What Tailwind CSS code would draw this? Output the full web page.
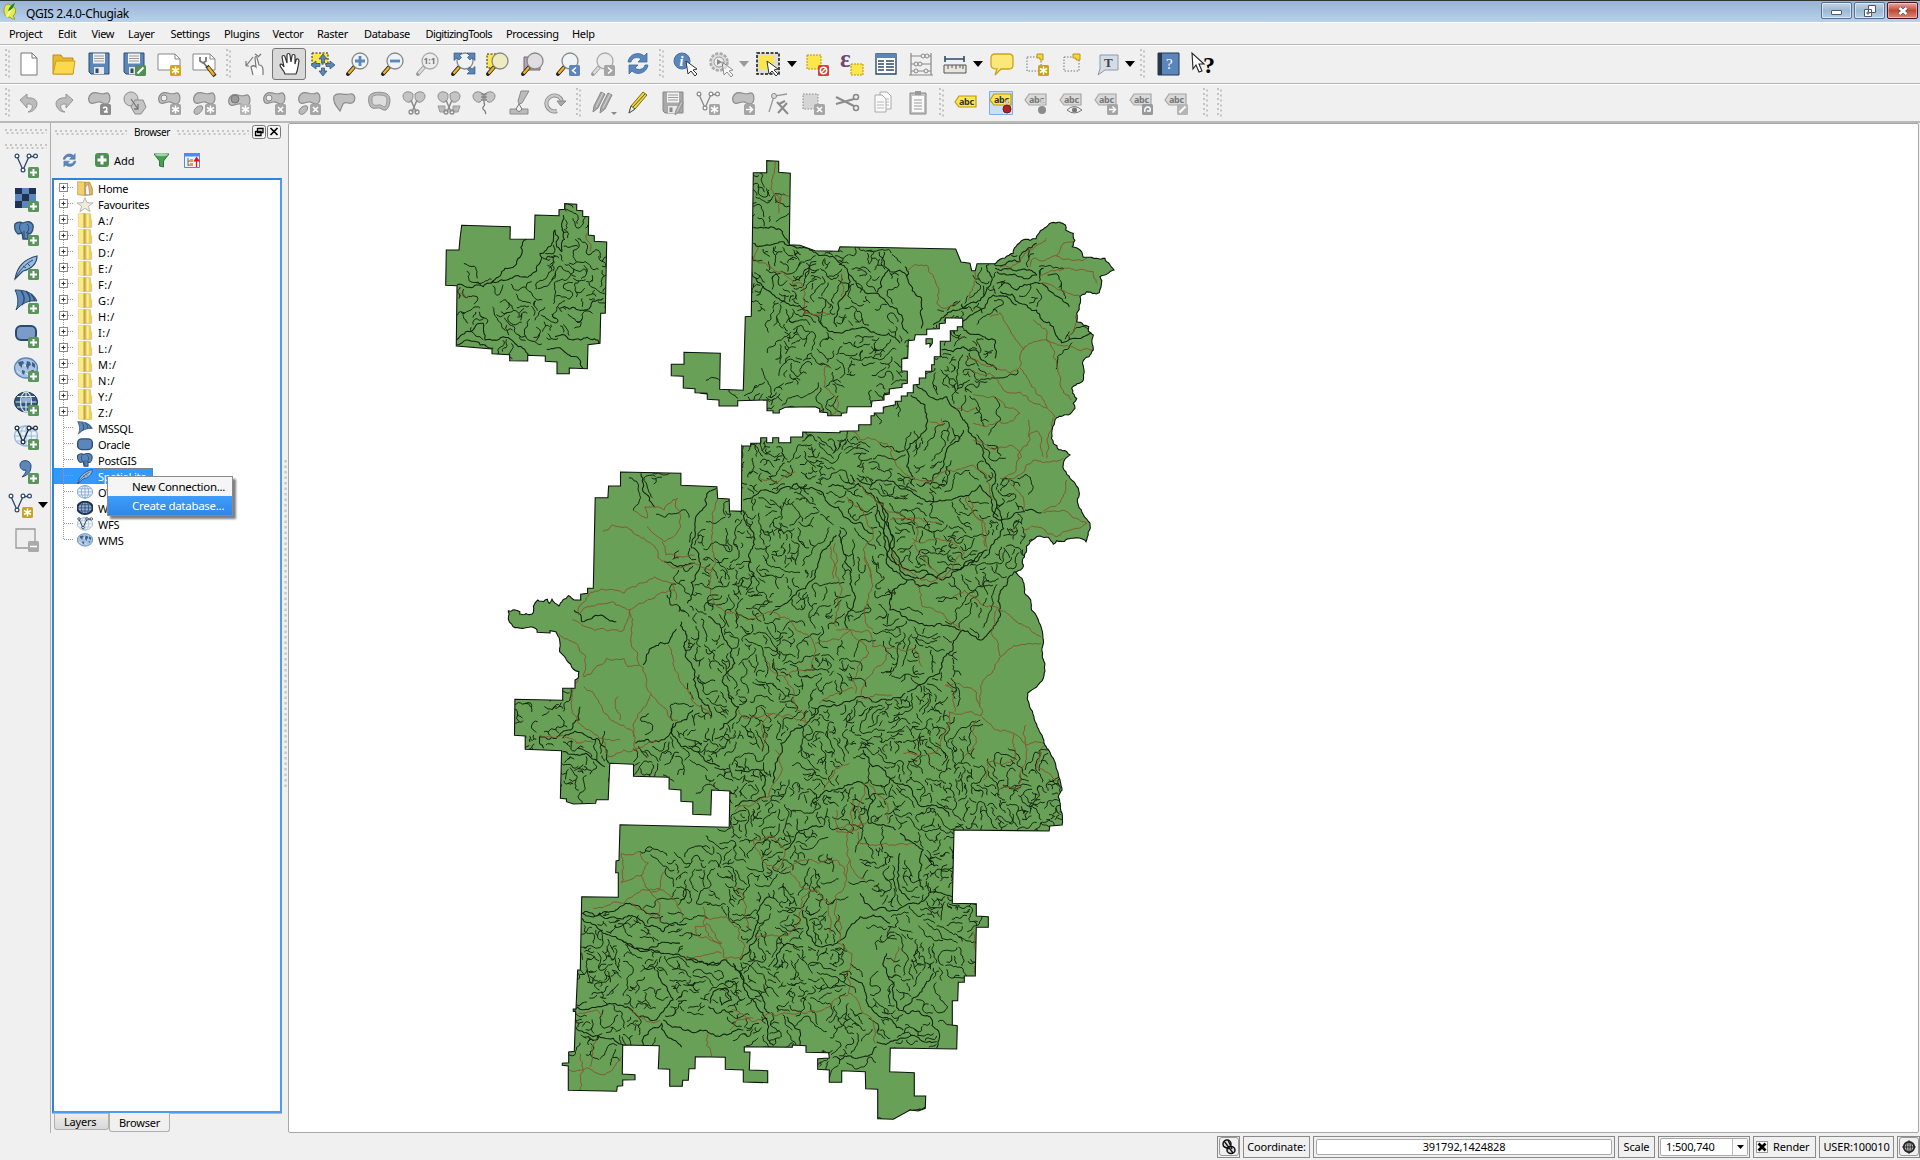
<!DOCTYPE html>
<html lang="en">
<head>
<meta charset="utf-8">
<title>QGIS 2.4.0-Chugiak</title>
<script src="https://cdn.jsdelivr.net/npm/@tailwindcss/browser@4"></script>
</head>
<body class="w-[1920px] h-[1160px] overflow-hidden bg-[#f0f0f0] text-black text-[11px] leading-none font-['Noto_Sans','Open_Sans',sans-serif] flex flex-col">

<header class="h-[22px] shrink-0 border-t border-[#333] bg-gradient-to-b from-[#98b4d4] to-[#b9d1ea] flex items-start">
  <svg class="w-4 h-[18px] ml-[2px] mt-[1px] shrink-0" viewBox="0 0 16 18"><path d="M7 2C3 2 1.500 6 2 10s3 6 6 5l2 2h3l-2-3c3-2 3-6 2-8z" fill="#e5e94c" stroke="#8ea32d"/><path d="M5 15L12 2" stroke="#f4f7b0" stroke-width="2"/><path d="M6 9c1-4 4-7 7-8-1 4-3 7-7 8z" fill="#28802c"/></svg>
  <span class="ml-2 mt-[5px] text-[12px] tracking-[-0.33px] leading-[15px]">QGIS 2.4.0-Chugiak</span>
  <div class="ml-auto mr-[2px] mt-[1px] flex gap-[2px]">
    <div class="w-[31px] h-[17px] rounded-[2px] border border-[#5b6f8e] ring-1 ring-inset ring-white/50 bg-gradient-to-b from-[#c2d5e8] via-[#9db8d3] to-[#b7cfe6] grid place-items-center"><div class="w-[11px] h-[5px] mt-1 bg-white border border-[#4d5870] rounded-[1px]"></div></div>
    <div class="w-[31px] h-[17px] rounded-[2px] border border-[#5b6f8e] ring-1 ring-inset ring-white/50 bg-gradient-to-b from-[#c2d5e8] via-[#9db8d3] to-[#b7cfe6] grid place-items-center"><svg class="w-3 h-3" viewBox="0 0 12 12"><path d="M4.500.5h7v7h-7zM.5 4.500h7v7h-7z" fill="#fff" stroke="#4d5870"/><path d="M3 7h2v2H3z" fill="#9db8d3" stroke="#4d5870" stroke-width=".8"/></svg></div>
    <div class="w-[31px] h-[17px] rounded-[2px] border border-[#4d1426] ring-1 ring-inset ring-white/40 bg-gradient-to-b from-[#e5a99d] via-[#c04a33] to-[#dc8a74] grid place-items-center"><svg class="w-3 h-[10px]" viewBox="0 0 12 10"><path d="M2.500 2l7 6M9.500 2l-7 6" stroke="#4b4f62" stroke-width="4.200"/><path d="M2.500 2l7 6M9.500 2l-7 6" stroke="#fff" stroke-width="2.600"/></svg></div>
  </div>
</header>

<nav id="menu" class="h-[23px] shrink-0 border-b border-[#b9b9b9] border-t border-t-white pl-[9px] flex items-center"></nav>
<div id="bar1" class="h-[39px] shrink-0 border-t border-t-white border-b border-b-[#b5b5b5] flex items-center pl-[5px] pb-[2px] [&_svg]:shrink-0"></div>
<div id="bar2" class="h-[39px] shrink-0 border-t border-t-white border-b-2 border-b-[#b9b9b9] flex items-center pl-[5px] [&_svg]:shrink-0"></div>

<main class="h-[1010px] shrink-0 flex">
  <aside class="w-[51px] shrink-0 border-r border-[#b0b0b0]">
    <div class="h-[25px] pt-[6px] px-[5px]">
      <svg class="w-[42px] h-[20px]"><path d="M0 1h42M1.500 4h42M0 16h42M1.500 19h42" stroke="#c4c4c4" stroke-width="2" stroke-dasharray="2 3"/></svg>
    </div>
    <div id="side" class="flex flex-col"></div>
  </aside>

  <section class="w-[231px] ml-[1px] shrink-0 flex flex-col">
    <div class="h-[18px] shrink-0 flex items-center pl-[3px]">
      <svg class="w-[72px] h-[5px]"><path d="M0 1h72M1.500 4h72" stroke="#c4c4c4" stroke-width="2" stroke-dasharray="2 3"/></svg>
      <span class="w-[50px] text-center text-[10px] tracking-[-0.4px]">Browser</span>
      <svg class="w-[72px] h-[5px]"><path d="M0 1h72M1.500 4h72" stroke="#c4c4c4" stroke-width="2" stroke-dasharray="2 3"/></svg>
      <svg class="w-[29px] h-[14px] ml-[3px]" viewBox="0 0 29 14"><rect x=".5" y=".5" width="13" height="13" rx="2" fill="#f4f4f4" stroke="#777"/><path d="M5.500 3v4.500H11V3.500H5.500M3.500 6v4.500H9V6.500H3.500" fill="none" stroke="#000" stroke-width="1.300"/><rect x="15.500" y=".5" width="13" height="13" rx="2" fill="#f4f4f4" stroke="#777"/><path d="M18.500 3l7 7M25.500 3l-7 7" stroke="#000" stroke-width="1.700"/></svg>
    </div>
    <div id="tools" class="h-[37px] shrink-0 flex items-center pl-[10px] pt-px"></div>
    <div class="relative h-[935px] shrink-0 mr-[1px] border-2 border-[#4a9df2] border-l-[#2f83dc] border-t-[#2f83dc] bg-white">
      <div id="tree" class="flex flex-col"></div>
      <div class="absolute left-[53px] top-[296px] w-[126px] h-[40px] bg-[#f5f5f5] border border-[#8a8a8a] shadow-[3px_3px_2px_rgba(0,0,0,0.5)] flex flex-col text-[11.500px] tracking-[-0.28px]">
        <div class="h-[19px] pl-[24px] pt-px flex items-center">New Connection...</div>
        <div class="h-[19px] pl-[24px] flex items-center text-white bg-gradient-to-b from-[#3f9dfc] to-[#2d87e6]">Create database...</div>
      </div>
    </div>
    <div class="h-5 shrink-0 flex items-start border-t border-[#b5b5b5] mr-px tracking-[-0.2px]">
      <div class="w-[55px] h-[16px] ml-[2px] rounded-b-[3px] border border-t-0 border-[#b0b0b0] bg-gradient-to-b from-[#ededed] to-[#d8d8d8] pl-[9px] pt-[2px]">Layers</div>
      <div class="w-[61px] h-[19px] -mt-px rounded-b-[3px] border border-t-0 border-[#b0b0b0] bg-[#f0f0f0] text-center pt-[4px]">Browser</div>
    </div>
  </section>

  <div class="w-[5px] shrink-0 flex items-start justify-center pt-[337px]"><svg class="w-[3px] h-[330px]"><path d="M1.500 0v330" stroke="#c8c8c8" stroke-width="2.500" stroke-dasharray="2.500 3"/></svg></div>
  <div class="flex-1 mr-px bg-white border border-[#a8a8a8] rounded-[2px]">
    <svg id="map" class="block w-[1629px] h-[1007px]" viewBox="289 124 1629 1007"></svg>
  </div>
</main>

<footer class="flex-1 flex items-center justify-end gap-[3px] tracking-[-0.15px]">
  <div class="w-[23px] h-[22px] border border-[#8a8a8a] grid place-items-center"><div class="w-5 h-[19px] rounded-[3px] border border-[#999] grid place-items-center"><svg class="size-4" viewBox="0 0 16 16"><ellipse cx="6" cy="5" rx="4" ry="4" fill="#ddd" stroke="#111" stroke-width="1.500"/><ellipse cx="10" cy="11" rx="4" ry="3.500" fill="#ddd" stroke="#111" stroke-width="1.500"/><path d="M3 2l9 12M7 1l4 9M2 7l6 3" stroke="#111" stroke-width="1.300"/></svg></div></div>
  <div class="w-[67px] h-[22px] border border-[#8a8a8a] grid place-items-center">Coordinate:</div>
  <div class="w-[302px] h-[22px] border border-[#8a8a8a] p-[2px]"><div class="size-full bg-white border border-[#aaa] rounded-[2px] grid place-items-center"><span>391792,1424828</span></div></div>
  <div class="w-[37px] h-[22px] border border-[#8a8a8a] grid place-items-center">Scale</div>
  <div class="w-[92px] h-[22px] border border-[#8a8a8a] p-px"><div class="size-full bg-white border border-[#aaa] rounded-[2px] flex items-center pl-[5px]"><span>1:500,740</span><span class="ml-auto h-full w-[15px] border-l border-[#bbb] grid place-items-center bg-[#fafafa]"><svg class="w-[7px] h-1" viewBox="0 0 7 4"><path d="M0 0h7L3.500 4z"/></svg></span></div></div>
  <div class="w-[63px] h-[22px] border border-[#8a8a8a] flex items-center pl-[2px] gap-[5px]"><svg class="w-3 h-3" viewBox="0 0 12 12"><rect x=".5" y=".5" width="11" height="11" fill="#fff" stroke="#999"/><path d="M2.500 2.500l7 7M9.500 2.500l-7 7" stroke="#000" stroke-width="2.800"/></svg>Render</div>
  <div class="w-[75px] h-[22px] border border-[#8a8a8a] grid place-items-center">USER:100010</div>
  <div class="w-[23px] h-[22px] border border-[#8a8a8a] grid place-items-center"><div class="w-5 h-[19px] rounded-[3px] border border-[#999] grid place-items-center"><svg class="size-[14px]" viewBox="0 0 16 16" fill="none" stroke="#222"><circle cx="8" cy="8" r="6" fill="#bbb" stroke-width="2"/><ellipse cx="8" cy="8" rx="2.800" ry="6"/><path d="M0 8h16M8 0v16"/></svg></div></div>
</footer>

<script>
// ---- icon artwork, all on a 24 x 24 grid ----
const B = '#5b86bb', N = '#2c4a6b', Y = '#fbe64b';
const lens = (c = '#f2b01e', f = '#eef3f3', s = '#888') => `<path d="M2 22L9 14" stroke="${c === '#ddd' ? '#999' : '#222'}" stroke-width="4" stroke-linecap="round"/><path d="M2.500 21.500L8 15.200" stroke="${c}" stroke-width="2.400"/><circle cx="14" cy="9" r="8" fill="${f}" stroke="${s}" stroke-width="1.300"/>`;
const sq = (c, inner, x = 13, y = 13) => `<rect x="${x}" y="${y}" width="11" height="11" rx="1.500" fill="${c}"/><g transform="translate(${x},${y})" stroke="#fff" fill="none" stroke-width="1.500">${inner}</g>`;
const star = '<path d="M5.500 1.500v8M2 3.500l7 4M9 3.500l-7 4"/>', cross = '<path d="M3 3l5 5M8 3l-5 5"/>', plus = '<path d="M5.500 2v7M2 5.500h7" stroke-width="2"/>', pen = '<path d="M2.500 8.500l6-6" stroke-width="2.200"/>', arr = '<path d="M2 5.500h6M5.500 2.500l3 3-3 3"/>';
const green = sq('#5a965c', plus, 14, 14);
const cursor = (x, y) => `<path transform="translate(${x},${y})" d="M0 0l2 13 3-3 4 5 2-2-4-4 4-1z" fill="#fff" stroke="#333"/>`;
const blob = (x = 0, y = 0, s = 1) => `<path transform="translate(${x},${y}) scale(${s})" d="M4 3C9-1 14 5 19 2c5-1 5 9 1 11-4 1-5-3-9-2S3 14 2 10c-1-3 0-5 2-7z" fill="#bfbfbf" stroke="#8b8b8b" stroke-width="1.200"/>`;
const globe = (f, s) => `<ellipse cx="12" cy="11" rx="11.500" ry="10" fill="${f}" stroke="${s}" stroke-width="1.300"/><path d="M1 11h22M3 6h18M3 16h18M12 1v20" stroke="${s}" fill="none"/><ellipse cx="12" cy="11" rx="5.500" ry="10" fill="none" stroke="${s}"/>`;
const vee = '<path d="M3 3.500L9 17 15 3.500h6" fill="none" stroke="#2c4a6b" stroke-width="1.300"/><g fill="#fff" stroke="#2c4a6b" stroke-width="1.200"><circle cx="3" cy="3" r="1.900"/><circle cx="9" cy="17" r="1.900"/><circle cx="15" cy="3" r="1.900"/><circle cx="21.500" cy="3" r="1.900"/></g>';
const eleph = `<path d="M1 3c3-3 6-2 8-1 4-2 8-2 10 2 1 3-1 8-3 9l-2-1 0 6h-5l-1-6-4 1C1 11 0 6 1 3z" fill="${B}" stroke="${N}" stroke-width="1.300"/><path d="M7 2c-2 3-2 7 1 10M13 3c3 3 2 7-1 9M10 10v7" stroke="${N}" fill="none"/>`;
const feather = `<path d="M1 24C3 12 10 4 23 1c0 7-5 13-14 15z" fill="#9bbbe0" stroke="${N}" stroke-width="1.200"/><path d="M1 24C5 16 11 9 19 5M9 11l3 2M13 8l3 3" stroke="${N}" fill="none"/>`;
const sail = `<path d="M1 1c9 0 18 2 22 11-8-1-15 2-21 9 3-7 2-14-1-20z" fill="${B}" stroke="${N}"/><path d="M7 2c4 5 4 10 1 14M12 2c4 4 5 9 3 11M17 5c3 3 4 5 3 7" stroke="${N}" fill="none" stroke-width="1.400"/>`;
const world = '<ellipse cx="12" cy="11" rx="11.500" ry="10" fill="#a9c4e2" stroke="#5b86bb" stroke-width="1.300"/><path d="M4 5l5-1 1 2-2 2v3l-3-3zM13 4l3 1 1 3-2 1-1 4-2-4zM18 5l3 2 0 4-3-2zM8 13l3 1-1 4-2-2zM17 13l3 0-1 3z" fill="#3f5f86"/><path d="M3 14l4 3M12 16l3 3M10 8l2 1" stroke="#e6eff8"/>';
const tag = (f, s, t) => `<path d="M1 9l4-6h17v11H5z" fill="${f}" stroke="${s}" stroke-width="1.200"/><text x="5" y="12" font-size="9" font-weight="bold" font-family="Noto Sans" letter-spacing="-.3" fill="${t}">abc</text>`;
const gt = tag('#d9d9d9', '#a5a5a5', '#777');
const doc = (x, y) => `<path d="M${x} ${y}h7l4 4v13h-11z" fill="#fafafa" stroke="#aaa"/><path d="M${x + 2} ${y + 7}h7m-7 3h7m-7 3h7" stroke="#bbb"/>`;
const sciss = '<path d="M9 9l5 12M15 9l-5 12" stroke="#8b8b8b" stroke-width="1.500"/><circle cx="9" cy="21" r="2" fill="none" stroke="#8b8b8b" stroke-width="1.300"/><circle cx="15" cy="21" r="2" fill="none" stroke="#8b8b8b" stroke-width="1.300"/>';
const lungs = '<path d="M11 3C7-1 1 1 1 5s4 7 7 6c3-2 3-4 3-8zM13 3c4-4 10-2 10 2s-4 7-7 6c-3-2-3-4-3-8z" fill="#c4c4c4" stroke="#8b8b8b"/>';
const floppy = (c, d) => `<path d="M2 1h20v21H4l-2-2z" fill="${c}" stroke="${d}"/><path d="M6 1.500h12v10H6z" fill="#f3f3f3"/><path d="M7 4h10M7 6.500h10M7 9h10" stroke="#999"/><path d="M7 15h10v7H7z" fill="#e8e8e8"/><path d="M8.500 16.500h3V21h-3z" fill="${d}"/>`;
const hand = '<path d="M8 22c-1-4-5-6-5-9 1-2 3 0 4 2L5 5c0-2 3-2 3 0l2 6V3c0-2 3-2 3 0l1 7 1-6c0-2 3-2 3 0v8l1-4c1-2 3-1 3 1-1 5-1 9-3 13z" fill="#fff" stroke="#333" stroke-width="1.200"/>';
const sync = c => `<path d="M2 10C3 2 13-1 18 4l3-3v9h-9l3-3C11 4 6 6 5 10zM22 13c-1 8-11 11-16 6l-3 3v-9h9l-3 3c4 3 9 1 10-3z" fill="${c}" stroke="#3e6ba0" stroke-width=".8"/>`;
const gpen = (x, y) => `<path transform="translate(${x},${y})" d="M0 20l1-6L8 0l4 2-7 14z" fill="#a8a8a8" stroke="#888"/><path transform="translate(${x},${y})" d="M3 15L10 1" stroke="#d5d5d5"/>`;
const I = {
 new: '<path d="M4 1h11l5 5v17H4z" fill="#fff" stroke="#777"/><path d="M15 1v5h5" fill="none" stroke="#777"/>',
 open: '<path d="M1 3h8l2 3h10v16H1z" fill="#e9b92d" stroke="#c08e12"/><path d="M4 9h19l-2 13H1z" fill="#fbd94f" stroke="#cf9e1c"/>',
 save: floppy(B, N), saveas: floppy(B, N) + sq('#4f8f53', pen),
 comp: '<path d="M1 2h17l5 5v11H1z" fill="#fff" stroke="#888"/><path d="M18 2v5h5" fill="none" stroke="#888"/>' + sq('#d6a50f', star),
 manager: '<path d="M1 2h17l5 5v11H1z" fill="#fff" stroke="#888"/><path d="M18 2v5h5" fill="none" stroke="#888"/><path d="M8 5v4l3 2 3-2V5M11 10l4 5" stroke="#777" stroke-width="1.800" fill="none"/><path d="M15 14l8 10" stroke="#333" stroke-width="4"/><path d="M16 15l6 8" stroke="#f2b01e" stroke-width="2.500"/>',
 touch: '<path d="M11 23L9 15c2-2 4-1 5 0l-1-9c0-2 2-2 2 0l2 7c3 0 4 2 4 5v5" fill="#f8f8f8" stroke="#777" stroke-width="1.200"/><path d="M13 2l3 2M11 5L4 14M4 14h3M4 14V9M16 5l3-3" fill="none" stroke="#777" stroke-width="1.200"/>',
 pan: hand,
 pansel: `<path d="M1 1h16v11H1z" fill="${Y}" stroke="#222" stroke-dasharray="2 1.500"/><path d="M12 2l4 5h-2.500v4h-3V7H8zM12 24l4-5h-2.500v-3h-3v3H8zM0 13l5-4v2.500h4v3H5V17zM24 13l-5-4v2.500h-4v3h4V17z" fill="${B}" stroke="${N}" stroke-width=".7"/>`,
 zin: lens() + `<path d="M14 4v10M9 9h10" stroke="${B}" stroke-width="2.800"/>`,
 zout: lens() + `<path d="M9 9h10" stroke="${B}" stroke-width="2.800"/>`,
 z11: lens('#ddd', '#ececec', '#aaa') + '<text x="7.500" y="12" font-size="8.500" font-weight="bold" fill="#777" font-family="Noto Sans">1:1</text>',
 zfull: lens() + `<g fill="${B}" stroke="${N}" stroke-width=".6"><path d="M3 1h8L8.500 3.500l2 2-2.500 2.500-2-2L3 8.500z"/><path d="M24 1h-8l2.500 2.500-2 2L19 8l2-2 3 2.500z"/><path d="M24 22h-8l2.500-2.500-2-2L19 15l2 2 3-2.500z"/></g>`,
 zsel: `<path d="M1 2h14v14H1z" fill="${Y}" stroke="#222" stroke-dasharray="2 1.500"/>` + lens('#f2b01e', '#ecebc2'),
 zlay: '<path d="M3 5h16v13H3z" fill="#b2a5b7" stroke="#75677c"/>' + lens('#f2b01e', '#dfdde2'),
 zlast: lens() + sq(B, '<path d="M7 2.500l-3.500 3 3.500 3"/>'), znext: lens('#ddd', '#ececec', '#aaa') + sq('#a5a5a5', '<path d="M4 2.500l3.500 3-3.500 3"/>'),
 sync: sync(B),
 info: `<circle cx="9" cy="9" r="8" fill="${B}" stroke="#45709f"/><text x="6.500" y="14" font-size="14" font-style="italic" font-weight="bold" font-family="Liberation Serif" fill="#fff">i</text>` + cursor(13, 9),
 act: '<circle cx="11" cy="10" r="8.500" fill="#ddd" stroke="#aaa" stroke-width="2.500" stroke-dasharray="3 1.500"/><circle cx="11" cy="10" r="5" fill="#eee" stroke="#999"/><path d="M9 7l5 3-5 3z" fill="#888"/><g opacity=".5">' + cursor(14, 10) + '</g>',
 sel: `<path d="M1 1h22v21H1z" fill="#ddd" stroke="#111" stroke-width="1.500" stroke-dasharray="3 1.500"/><path d="M3 3h15v14H3z" fill="${Y}"/>` + cursor(11, 9),
 desel: `<path d="M2 3h14v14H2z" fill="${Y}" stroke="#b79410" stroke-dasharray="2 1"/>` + sq('#d93b36', '<circle cx="5.500" cy="5.500" r="3.200"/><path d="M3 8l5-5"/>'),
 expr: `<text x="0" y="15" font-size="25" font-family="Liberation Serif" font-weight="bold" fill="#6a4676">ε</text><path d="M11 12h12v11H11z" fill="${Y}" stroke="#b79410" stroke-dasharray="2 1"/>`,
 table: `<path d="M2 2h20v20H2z" fill="#fff" stroke="${N}" stroke-width="1.400"/><path d="M2 2h20v4H2z" fill="${B}"/><path d="M4 9h6M12 9h8M4 12h6M12 12h8M4 15h6M12 15h8M4 18h6M12 18h8" stroke="${N}" stroke-width="1.300"/>`,
 abacus: '<path d="M2 1v22M22 1v22M0 23h24M2 4h20M2 12h20M2 19h20" stroke="#888" stroke-width="1.200"/><g fill="#eee" stroke="#888"><circle cx="14" cy="4" r="2"/><circle cx="18" cy="4" r="2"/><circle cx="7" cy="12" r="2"/><circle cx="11" cy="12" r="2"/><circle cx="7" cy="19" r="2"/><circle cx="17" cy="19" r="2"/></g>',
 ruler: `<path d="M2 7h19M2 4v6M21 4v6" stroke="${N}" stroke-width="1.600"/><path d="M1 13h22v8H1z" fill="#e6e6dd" stroke="#555"/><path d="M5 13v4M9 13v3M13 13v4M17 13v3M20 13v4" stroke="#555"/>`,
 tip: '<path d="M5 2h14q4 0 4 4v7q0 4-4 4h-8l-6 6 2-6Q1 17 1 13V6q0-4 4-4z" fill="#fbe878" stroke="#c9a51b" stroke-width="1.300"/>',
 bmnew: '<path d="M2 5h14v14H2z" fill="none" stroke="#777" stroke-dasharray="1.500 1.500"/><path d="M12 2h6v6h-3v-2h-3z" fill="#f4d63b" stroke="#b79410"/>' + sq('#c9a51b', star),
 bm: '<path d="M4 5h15v14H4z" fill="none" stroke="#777" stroke-dasharray="1.500 1.500"/><path d="M13 2h7v6h-4v-2h-3z" fill="#f4d63b" stroke="#b79410"/>',
 text: '<path d="M5 3h18v15H10l-7 5 2-6z" fill="#d3dde7" stroke="#909aa5"/><text x="9" y="15" font-size="13" font-weight="bold" font-family="Liberation Serif" fill="#444">T</text>',
 help: `<path d="M2 1h21v22H2z" fill="${B}" stroke="#26384c"/><path d="M2 1h4v22H2z" fill="#26384c"/><text x="10" y="17" font-size="15" fill="#fff" font-family="Liberation Serif">?</text>`,
 what: '<path d="M1 1l1 16 3-4 3 7 3-1-3-7h5z" fill="#fff" stroke="#222" stroke-width="1.100"/><text x="12" y="21" font-size="24" font-family="Liberation Serif" font-weight="bold">?</text>',
 undo: '<path d="M3 9l7-6v4c8-1 12 4 9 9-2 4-5 5-8 5 5-2 7-9-1-8v4z" fill="#bcbcbc" stroke="#959595"/>',
 redo: '<path d="M21 9l-7-6v4C6 6 2 11 5 16c2 4 5 5 8 5-5-2-7-9 1-8v4z" fill="#bcbcbc" stroke="#959595"/>',
 simp: blob() + sq('#8b8b8b', '<path d="M3 4c5-3 5 3 1 4h4"/>'),
 rot: '<circle cx="9" cy="8" r="7" fill="#ccc" stroke="#8b8b8b"/><path d="M13 9h8l3 7-5 7h-6l-4-7z" fill="#c4c4c4" stroke="#8b8b8b"/><path d="M9 8l7 10m0-5v5h-4" stroke="#777" fill="none" stroke-width="1.300"/>',
 ring: blob() + '<circle cx="7" cy="7" r="3" fill="#eee" stroke="#888"/>' + sq('#a5a5a5', star),
 part: blob() + '<path d="M2 21c0-4 5-7 8-6 2 2-1 7-4 8-2 1-4 0-4-2z" fill="#bbb" stroke="#888"/>' + sq('#a5a5a5', star),
 fill: blob(0, 2) + '<circle cx="8" cy="8" r="4" fill="#999" stroke="#777"/>' + sq('#b5b5b5', star),
 dring: blob() + '<circle cx="7" cy="7" r="3" fill="#eee" stroke="#888"/>' + sq('#a5a5a5', cross),
 dpart: blob() + '<path d="M2 21c0-4 5-7 8-6 2 2-1 7-4 8-2 1-4 0-4-2z" fill="#bbb" stroke="#888"/>' + sq('#a5a5a5', cross),
 resh: '<path d="M2 5C6 0 12 5 18 3c6-1 6 7 2 9-4 1-6-2-9 1l-3 7c-3-4-8-9-6-15z" fill="#c0c0c0" stroke="#8b8b8b" stroke-width="1.200"/>',
 off: '<path d="M3 4c4-4 14-3 17-1 5 3 3 13-1 16-4 1-5-3-9-2s-7 0-8-5 0-7 1-8z" fill="#b9b9b9" stroke="#8b8b8b"/><path d="M5 6c3-3 10-2 13-1s2 9 0 11c-2 0-4-3-7-2s-5 0-6-3z" fill="#ddd" stroke="#999"/>',
 split: lungs + sciss, splitp: lungs + '<path d="M1 15h7v6H3zM16 15h7l-2 6h-5z" fill="#bbb" stroke="#999"/>' + sciss,
 merge: lungs + '<path d="M9 3h6M9 6h6M9 9h6M12 3v9c3 3-4 4 0 7 2 1 1 3 2 4" fill="none" stroke="#777" stroke-width="1.200"/>',
 mattr: '<path d="M14 0h8l-7 12-3 1-1-3zM3 18h18v5H3z" fill="#bbb" stroke="#8b8b8b"/><path d="M12 13l3 5q-3 5-6 0z" fill="#eee" stroke="#777"/>',
 rotp: '<path d="M15 20A8 8 0 1 1 20 10" fill="none" stroke="#8b8b8b" stroke-width="4"/><path d="M15 20A8 8 0 1 1 20 10" fill="none" stroke="#c9c9c9" stroke-width="2.300"/><path d="M15 10h9l-5 5z" fill="#aaa" stroke="#888"/>',
 pens: gpen(1, 1) + gpen(8, 2) + '<path d="M19 21h6l-3 3z" fill="#888"/>',
 pencil: '<path d="M3 22l2-7L17 1l4 3L9 18z" fill="#f0d53c" stroke="#7d6b13"/><path d="M3 22l2-7 4 3zM7 16L19 3" fill="#eee" stroke="#555"/>',
 gsave: floppy('#a9a9a9', '#888') + gpen(13, 10).replaceAll('translate(13,10)', 'translate(14,10) scale(.7)'),
 node: vee.replaceAll('#2c4a6b', '#888') + sq('#a5a5a5', star),
 mvf: blob() + sq('#a5a5a5', arr),
 nodet: '<path d="M3 21L8 5l13-2" fill="none" stroke="#999" stroke-width="1.300"/><path d="M12 22l9-10M11 11l11 12M13 13l6-3" fill="none" stroke="#8b8b8b" stroke-width="2"/><circle cx="8" cy="5" r="2.500" fill="#ddd" stroke="#888"/>',
 dsel: '<path d="M2 3h15v15H2z" fill="#d5d5d5" stroke="#888" stroke-dasharray="1.500 1.500"/>' + sq('#a5a5a5', cross),
 cut: '<path d="M0 6l18 9M0 13L18 8" stroke="#8b8b8b" stroke-width="2"/><circle cx="20" cy="6" r="2.500" fill="none" stroke="#888" stroke-width="1.500"/><circle cx="20" cy="17" r="2.500" fill="none" stroke="#888" stroke-width="1.500"/>',
 copy: doc(9, 1) + doc(4, 4), paste: '<path d="M4 2h16v21H4z" fill="#c2c2c2" stroke="#888"/><path d="M6 5h12v16H6z" fill="#fafafa"/><path d="M8 9h8M8 12h8M8 15h8M8 18h8" stroke="#999"/><path d="M9 0h6v4H9z" fill="#999"/>',
 lab: '<g transform="translate(0,2)">' + tag(Y, '#b99a12', '#333') + '</g>',
 pin: '<path d="M.5.500h23v23H.5z" fill="#c8dff5" stroke="#7eaee6"/>' + tag(Y, '#b99a12', '#333') + '<path d="M18 9v6" stroke="#ccc" stroke-width="3"/><circle cx="18" cy="18" r="4" fill="#b32323" stroke="#7a1515"/>',
 gpin: gt + '<path d="M18 8v6" stroke="#ccc" stroke-width="3"/><circle cx="18" cy="19" r="4" fill="#8b8b8b"/>',
 eye: gt + '<path d="M8 19q7-7 15 0-8 6-15 0z" fill="#eee" stroke="#777"/><circle cx="15.500" cy="19" r="2.500" fill="#777"/>',
 lmv: gt + sq('#a5a5a5', arr), lrot: gt + sq('#999', '<path d="M3 8c-2-6 7-7 5-1l-3 0"/>'), lchg: gt + sq('#b5b5b5', pen),
 vec: vee + green,
 ras: `<path d="M1 1h21v20H1z" fill="${B}"/><path d="M1 1h7v6H1zM15 1h7v6h-7zM8 7h7v7H8zM1 14h7v7H1z" fill="#1f3350"/>` + green,
 pg: eleph + green, sl: feather + green, ms: sail + green,
 ora: `<rect x="2" y="3" width="20" height="14" rx="5" fill="#7b9cc9" stroke="#2c4a6b" stroke-width="2"/>` + green,
 wms: world + green, wcs: '<ellipse cx="12" cy="11" rx="11.500" ry="10" fill="#34547c" stroke="#1e3352"/><path d="M3 5.500h18M1.500 11h21M3 16h18M12 1v20" stroke="#dce8f4" stroke-width="1.200" fill="none"/><ellipse cx="12" cy="11" rx="5.500" ry="10" fill="none" stroke="#dce8f4" stroke-width="1.200"/><path d="M8 6.500h3.500v4H7zM13 6.500h3l1 4h-4z" fill="#8fb1d9"/>' + green,
 wfs: globe('#e9f1f9', '#9db9da') + vee.replaceAll('#2c4a6b', '#1c2c40') + green,
 comma: `<path d="M6 6c0-6 11-6 11 1 0 6-3 9-9 11 3-3 4-5 4-7-3 1-6-1-6-5z" fill="${B}" stroke="${N}"/>` + green,
 newv: vee + sq('#c9a51b', star, 14, 14),
 rem: '<path d="M2 2h19v19H2z" fill="#eee" stroke="#999" stroke-width="1.300"/>' + sq('#aaa', '<path d="M2 5.500h7"/>', 14, 14),
 t_home: '<path d="M1 1l11 1v21l-11-1z" fill="#f4cf6d" stroke="#b98f34"/><path d="M12 2h7l4 10v10l-11 1z" fill="#e8b95a" stroke="#a87a2c"/><path d="M13 22V10l4-6 2 18z" fill="#fff" stroke="#888"/>',
 t_fav: '<path d="M12 1l3 8 9 .5-7 5.500 2.500 8.500L12 18l-7.500 5.500L7 15 0 9.500 9 9z" fill="#ececdf" stroke="#b6b6a4" stroke-width="1.500"/>',
 t_dir: '<path d="M2 1l9-1v24l-9-2z" fill="#fbe98c" stroke="#d8c36a" stroke-width=".8"/><path d="M10 1h10l1 9 1 2v11H10z" fill="#e9d05f" stroke="#cdb14c" stroke-width=".8"/><path d="M11.500 1v22" stroke="#c7a63b" stroke-width="2.500"/><path d="M16 2v20" stroke="#fdf2a6" stroke-width="3"/>',
 t_ms: sail, t_or: `<rect x="1" y="3" width="22" height="17" rx="6" fill="${B}" stroke="#2c4a6b" stroke-width="2"/>`, t_pg: '<g transform="scale(1.180)">' + eleph + '</g>', t_sl: feather, t_ows: globe('#eef4fb', '#6d97cb'), t_wcs: globe('#8fb1d9', '#1e3352').replaceAll('stroke-width="1.300"', 'stroke-width="3"'), t_wfs: globe('#f3f7fb', '#9db9da') + vee.replaceAll('#2c4a6b', '#1c2c40'), t_wms: world,
};
const svg = (n, c = 'size-6') => `<svg class="${c}" viewBox="0 0 24 24" overflow="visible">${I[n]}</svg>`;
const grip = '<svg class="w-[6px] h-[30px]"><path d="M1 0v30M4 1.500v30" stroke="#c4c4c4" stroke-width="2" stroke-dasharray="2 3"/></svg>';
const px = (w, inner, c = '') => `<div class="flex shrink-0 items-center justify-center ${c}" style="width:${w}px">${inner}</div>`;
const tri = c => `<svg class="w-[10px] h-[6px]" viewBox="0 0 10 6"><path d="M0 0h10L5 6z" fill="${c}"/></svg>`;
const row = list => list.map(e => e === 'pan' ? px(34, svg('pan'), 'h-8 rounded-[3px] border border-[#777] bg-[#d9d9d9]')
  : Array.isArray(e) ? px(e[1], e[0] === '|' ? grip : e[0] === 'v' ? tri('#000') : e[0] === 'g' ? tri('#999') : e[0] ? svg(e[0]) : '') : px(35, svg(e))).join('');

menu.innerHTML = [['Project', 49], ['Edit', 33.500], ['View', 36.500], ['Layer', 42.500], ['Settings', 53.500], ['Plugins', 48.500], ['Vector', 44.500], ['Raster', 47], ['Database', 61.500], ['DigitizingTools', 80.500], ['Processing', 66], ['Help', 40]]
  .map(([t, w]) => `<span class="${t.length > 9 ? 'tracking-[-0.62px]' : 'tracking-[-0.35px]'}" style="width:${w}px">${t}</span>`).join('').replace('tracking-[-0.62px]" style="width:66', 'tracking-[-0.35px]" style="width:66');
bar1.innerHTML = row([['|', 6.500], 'new', 'open', 'save', 'saveas', 'comp', 'manager', ['|', 15], 'touch', 'pan', 'pansel', 'zin', 'zout', 'z11', 'zfull', 'zsel', 'zlay', 'zlast', 'znext', 'sync', ['|', 12], 'info', 'act', ['g', 12], ['', 1], 'sel', ['v', 12], ['', 2.500],
  ['desel', 34.500], ['expr', 34.500], ['table', 34.500], ['abacus', 34.500], ['ruler', 34.500], ['v', 10], ['', 2], 'tip', 'bmnew', 'bm', 'text', ['v', 10], ['|', 16], 'help', 'what']);
bar2.innerHTML = row([['|', 6.500], 'undo', 'redo', 'simp', 'rot', 'ring', 'part', 'fill', 'dring', 'dpart', 'resh', 'off', 'split', 'splitp', 'merge', 'mattr', 'rotp', ['|', 15], 'pens', ['pencil', 32], ['', 2], 'gsave', 'node', 'mvf', 'nodet', 'dsel', 'cut', 'copy', 'paste', ['|', 13], 'lab', 'pin', 'gpin', 'eye', 'lmv', 'lrot', 'lchg', ['', 7], ['|', 10], ['|', 18]]);
side.innerHTML = ['vec', 'ras', 'pg', 'sl', 'ms', 'ora', 'wms', 'wcs', 'wfs', 'comma', 'newv', 'rem'].map(n =>
  `<div class="h-[34px] flex items-center ${n === 'newv' ? 'pl-[8px] gap-[6px]' : 'pl-[14px]'}">${svg(n)}${n === 'newv' ? tri('#000') : ''}</div>`).join('');
tools.innerHTML = svg('sync', 'size-[15px]') +
  '<svg class="size-[14px] ml-[18px]" viewBox="0 0 14 14"><rect width="14" height="14" rx="3" fill="#4f8f53"/><path d="M7 2.500v9M2.500 7h9" stroke="#fff" stroke-width="3"/></svg><span class="ml-[5px] w-[40px]">Add</span>' +
  '<svg class="size-[15px]" viewBox="0 0 15 15"><path d="M0 1h15L9.500 8v6l-4-1V8z" fill="#46a052" stroke="#2f7a3b"/><ellipse cx="7.500" cy="1.800" rx="6.500" ry="1.500" fill="#a5d6a8"/></svg>' +
  '<svg class="w-4 h-[15px] ml-[15px]" viewBox="0 0 16 15"><path d="M.5.500h15v14H.5z" fill="#eef4fc" stroke="#5a86d6"/><path d="M0 0h16v3.500H0z" fill="#4f8af0"/><path d="M4 5v8M4 8h3M4 12h3" stroke="#666"/><path d="M6 6h3v3H6zM6 10h3v3H6z" fill="#f39c3a"/><path d="M12.500 14V8H10.500L12.500 4.500 15 8H13" fill="#e11" stroke="#e11" stroke-width="1.200"/></svg>';

// ---- browser tree ----
const nodes = [['t_home', 'Home'], ['t_fav', 'Favourites'], ...'ACDEFGHILMNYZ'.split('').map(d => ['t_dir', d + ':/']), ['t_ms', 'MSSQL'], ['t_or', 'Oracle'], ['t_pg', 'PostGIS'], ['t_sl', 'SpatiaLite'], ['t_ows', 'OWS'], ['t_wcs', 'WCS'], ['t_wfs', 'WFS'], ['t_wms', 'WMS']];
tree.innerHTML = nodes.map(([ic, t], i) => {
  const on = t === 'SpatiaLite', last = i === nodes.length - 1, box = i < 15, dir = ic === 't_dir';
  return `<div class="h-4 flex items-center"><div class="h-4 w-[42px] pl-[4px] flex items-center ${on ? 'bg-[#3399ff]' : ''}"><svg class="w-[18px] h-4 shrink-0" viewBox="0 0 18 16"><path d="M5.500 ${i ? 0 : 7}V${last ? 8 : 16}M6 7.500h10" stroke="#999" stroke-dasharray="1 1" fill="none"/>${box ? '<rect x="1.500" y="3.500" width="8" height="8" fill="#fff" stroke="#8a8a8a"/><path d="M3.500 7.500h4M5.500 5.500v4" stroke="#333"/>' : ''}</svg><svg class="w-4 h-[15px] shrink-0 ml-px" viewBox="0 0 24 24" preserveAspectRatio="none">${I[ic]}</svg></div><span class="h-4 flex items-center ${dir ? 'tracking-[0.6px]' : 'tracking-[-0.25px]'} ${on ? 'bg-[#3399ff] text-white border border-dotted border-[#c96a1a] pr-[6px] pl-px' : 'pl-[2px]'}">${t}</span></div>`;
}).join('');

// ---- map ----
// Each survey sheet has its own origin and scale; points are digitised in sheet units.
const sheets = { A: [430, 150, 3, 3], B: [700, 150, 3, 3], C: [490, 430, 2.6133, 3], D: [540, 800, 3, 3] };
const pts = (k, s) => { const [ox, oy, sx, sy] = sheets[k]; return s.trim().split(/\s+/).map(p => { const [x, y] = p.split(','); return [ox + x / sx, oy + y / sy]; }); };
const d = a => 'M' + a.map(p => p[0].toFixed(1) + ' ' + p[1].toFixed(1)).join('L');
let seed = 20140;
const rnd = () => { seed |= 0; seed = seed + 0x6D2B79F5 | 0; let t = Math.imul(seed ^ seed >>> 15, 1 | seed); t = t + Math.imul(t ^ t >>> 7, 61 | t) ^ t; return ((t ^ t >>> 14) >>> 0) / 4294967296; };
const rough = (a, k = .13, min = 3) => { const o = [a[0]]; const go = (p, q) => { const l = Math.hypot(q[0] - p[0], q[1] - p[1]); if (l < min) { o.push(q); return; } const f = (rnd() - .5) * 2 * k; const m = [(p[0] + q[0]) / 2 - (q[1] - p[1]) * f, (p[1] + q[1]) / 2 + (q[0] - p[0]) * f]; go(p, m); go(m, q); }; for (let i = 1; i < a.length; i++) go(a[i - 1], a[i]); return o; };

const main = [
 ...pts('B', '126,888 152,888 152,880 182,880 182,863 200,863 200,878 218,878 218,863 236,863 236,878 272,878 272,861 308,861 308,846 420,848 420,844 476,842 476,824 513,824 513,797 523,797 523,789 550,789 550,772 586,764 586,754 604,754 604,738 622,738 622,728 640,728 640,705 658,703 658,684 677,684 677,664 695,664 695,644 703,644 703,620 721,620 721,574 751,574 751,542 772,542 772,530 788,530 788,505 736,503 736,519 718,521 718,536 680,538 680,554 646,554 643,570 625,572 623,625 605,627 605,662 622,664 622,700 606,702 606,712 568,717 568,732 552,735 552,750 516,753 514,770 442,770 440,788 424,790 424,797 383,797 383,788 359,786 359,776 345,770 256,772 238,780 238,789 219,789 219,782 201,782 201,750 113,752 113,768 57,768 57,750 22,748 22,732 0,730'),
 ...pts('A', '832,730 795,728 795,716 760,714 760,679 724,677 724,643 762,643 762,607 871,610 869,718 940,721 946,500 964,499 970,68 1010,68 1010,32 1046,34 1046,67 1081,70 1078,284'),
 ...pts('B', '268,284 300,286 345,302 415,304 420,290 767,297 783,336 810,340 815,362 826,362 831,341 886,341'),
 ...rough(pts('B', '886,341 900,328 915,324 940,310 948,290 970,269 1008,266 1015,252 1030,238 1045,225 1080,217 1096,225 1097,240 1120,250 1117,290 1140,300 1150,322 1190,325 1215,325 1242,360 1200,380 1204,405 1198,428 1160,425 1155,432 1140,440 1138,465 1130,490 1130,515 1150,525 1166,530 1165,543 1180,555 1180,600 1148,635 1152,660 1150,690 1115,715 1118,730 1130,745 1120,760 1125,775 1105,795 1070,803 1058,830 1055,850 1060,880 1100,905 1110,915 1090,940 1092,960 1110,985 1125,1000 1135,1065 1170,1120 1158,1175 1070,1172 1060,1183 1045,1162 1020,1158 990,1175 975,1210 970,1250 950,1265'), .16),
 ...rough(pts('C', '1372,425 1390,445 1397,490 1413,510 1415,540 1440,590 1445,620 1442,660 1450,700 1446,745 1405,790 1410,830 1430,890 1450,945 1485,1030 1495,1080 1485,1100 1490,1120 1495,1150 1495,1185'), .08), ...pts('C', '1463,1188 1461,1203 1211,1200'),
 ...pts('D', '1242,92 1237,310 1309,311 1309,348 1345,350 1345,382 1309,382 1306,528 1273,528 1273,547 1255,547 1253,602 1237,602 1237,675 1252,677 1250,747 1051,744 1049,815 1123,818 1123,888 1157,888 1156,925 1135,933 1110,930 1060,958 1013,956 1013,868 977,866 976,815 905,812 905,847 868,847 868,810 833,808 833,776 868,774 866,758 798,757 798,737 757,735 757,742 613,740 613,756 630,756 628,810 683,812 683,848 610,846 610,810 556,808 556,772 466,770 465,806 447,806 445,841 428,841 427,859 389,859 389,808 355,806 358,737 248,735 247,822 285,824 285,839 248,840 248,857 232,859 230,874 85,871 85,798 67,796 67,790 86,788 86,756 103,754 107,635 100,634 100,627 108,627 113,510 121,510 125,290 235,292 235,218 227,218 228,183 237,181 240,74 566,82'),
 ...pts('C', '625,1190 627,1083 579,1080 577,1155 530,1153 530,1116 499,1114 499,1080 468,1077 468,1042 375,1039 375,1003 313,1000 309,1109 278,1109 276,1120 218,1122 200,1115 200,1107 184,1105 187,962 92,958 92,918 64,916 65,808 190,811 190,775 222,775 222,750 230,745'),
 ...rough(pts('C', '230,745 232,725 218,718 200,690 182,665 182,630 172,605'), .12), ...pts('C', '157,602 157,609 123,607 123,600'), ...rough(pts('C', '123,600 80,595 60,590 48,560 48,542 78,545 78,552 110,552 125,510 140,515 150,508 155,520 162,508 180,528 190,510 205,497 220,510'), .16),
 ...pts('C', '237,510 237,493 255,490 255,475 270,475 275,203 308,203 310,168 341,168 341,126 499,130 499,166 593,170 595,205 625,207 626,242 657,244 658,47')];
const west = pts('A', '95,226 241,230 240,267 313,268 315,195 387,197 387,179 404,178 404,161 440,163 440,181 458,182 458,199 476,200 475,255 493,257 493,274 530,276 526,490 512,490 510,580 474,584 472,656 418,654 418,671 381,671 381,636 346,634 346,618 293,616 293,633 239,632 239,614 186,611 186,597 79,588 81,407 47,406 49,300 87,300 90,266');
const islet = pts('B', '678,566 697,566 697,580 690,590 690,580 678,582');
const outline = [main, west, islet].map(a => d(a) + 'Z').join('');

const black = [
 ['A', '290,268 270,322 225,355 190,392 182,400'], ['A', '81,405 110,412 160,410 200,397 240,385 290,382 320,362 330,310 365,285 375,240 380,290 395,305 395,230 400,195'], ['A', '79,570 120,545 160,520 165,570 220,560 265,590 295,615'], ['A', '81,585 140,575 190,595'], ['A', '375,560 430,570 510,580'], ['A', '350,598 400,602 440,620 458,654'], ['A', '400,470 470,480 520,445'],
 ['A', '970,232 1030,232 1060,255 1075,280'], ['A', '970,280 1010,284 1078,286'],
 ['B', '268,286 350,310 410,330 445,370 445,420 415,480 410,530'], ['B', '445,370 470,405 530,430 590,475 605,520 625,550'], ['B', '615,350 625,395 660,440 664,535'], ['B', '565,360 545,410 530,428'], ['B', '545,322 570,365 600,360 620,380'], ['B', '157,365 200,420 260,460 330,490 370,530 450,540 520,545 600,580'],
 ['B', '700,525 760,480 800,465 850,440 875,380 860,345'], ['B', '886,355 960,360 1010,375 960,380 890,365'], ['B', '890,400 950,420 1000,400 1060,430 1108,470'], ['B', '900,425 960,460 1010,480 1060,530 1085,578 1150,560 1180,550'], ['B', '900,350 960,335 980,300 1010,280'], ['B', '785,520 840,480 880,435 950,465'], ['B', '790,540 850,560 885,570 885,625'], ['B', '725,600 790,590 860,640 890,660'],
 ['B', '632,735 675,765 680,820 650,870 620,900 620,950 640,980'], ['B', '650,705 740,740 780,790 820,860 860,940 885,1000 890,1060 880,1100'], ['B', '790,840 745,890 730,950 690,1005'], ['B', '470,985 560,990 640,1030 720,1050 790,1040 840,1005 870,1040 895,1100'], ['B', '385,1010 440,1018 475,1000 530,1055 565,1130 575,1200 640,1260 710,1285 790,1250 850,1205'], ['B', '130,1050 230,1030 290,1000 350,1020 385,1060 430,1100 520,1150'], ['B', '975,1080 1025,1088'], ['B', '880,1100 930,1105 975,1085'],
 ['B', '850,1225 900,1160 905,1110 890,1060'], ['B', '535,1080 550,1150 560,1210 590,1240'],
 ['C', '590,175 555,240 535,300 550,400 515,520'], ['C', '395,130 405,190 430,230'], ['C', '455,395 490,410 535,400'], ['C', '500,575 510,660 535,730 545,800 580,860'], ['C', '487,597 465,640 430,650 400,705'], ['C', '905,315 865,370 850,440 790,500 745,530'], ['C', '915,300 945,420 955,500 935,595'], ['C', '1010,200 1045,300 1050,380 1100,440 1180,450 1240,400 1300,360'], ['C', '1010,220 1030,310 1035,390 1080,445 1170,460'], ['C', '1090,450 1050,490 1045,540 1100,570 1160,590 1230,600'], ['C', '1370,425 1330,500 1310,600 1280,630 1235,600'], ['C', '1235,600 1210,660 1175,730 1090,785'],
 ['C', '1085,790 1020,810 940,815 860,830 820,890 760,940 745,1000 740,1060'], ['C', '660,240 690,330 690,430 670,480'], ['C', '570,560 610,620 640,700 610,760 650,830 600,900'], ['C', '380,940 440,935 485,880 530,840'], ['C', '480,880 500,950 560,990 600,1010'], ['C', '235,830 210,900 130,920 140,955'], ['C', '190,925 280,925 300,950 310,1000'], ['C', '190,965 250,970 300,1010'], ['C', '975,960 1000,1010 1060,1060 1130,1130 1200,1160'], ['C', '640,1020 720,1050 720,1100 640,1130'], ['C', '975,1060 1000,1110 990,1180 1060,1200'], ['C', '975,1060 900,1080 840,1130'], ['C', '220,540 240,575 290,555 330,575'],
 ['D', '125,340 200,335 270,310 340,340 360,348'], ['D', '125,355 190,400 260,430 330,450 400,465 440,480 500,490 560,480 590,510 640,570 690,640'], ['D', '125,340 230,355 300,360 350,380 370,395 440,370'], ['D', '245,420 300,445 350,440 420,430'], ['D', '110,620 200,615 270,625 330,660 400,600 380,560 350,510'], ['D', '370,660 430,690 480,690 560,705 610,690'], ['D', '310,735 330,690 365,670 400,720 425,742'], ['D', '440,470 470,480 540,490'], ['D', '580,490 610,560 650,620 680,660 700,735'], ['D', '620,430 640,400 650,340 690,290'], ['D', '600,480 630,435 655,390'], ['D', '735,150 770,100 850,80'], ['D', '1080,100 1120,130 1150,150 1150,270'], ['D', '1080,160 1075,250 1110,300'], ['D', '960,280 1000,330 1110,310 1235,290'], ['D', '890,430 840,440 800,400 790,330'], ['D', '890,430 930,380 960,350 1000,345 1050,370'], ['D', '930,530 980,590 1020,650 1090,690'], ['D', '1010,725 1080,715 1190,725'], ['D', '1040,460 1040,510 1060,590 1100,640 1170,650 1190,745'], ['D', '1010,740 970,770 900,780'], ['D', '780,735 780,690 740,650'], ['D', '1180,520 1130,590 1090,630'], ['D', '107,680 160,710 220,715 250,735'], ['D', '1013,954 1060,958 1110,930 1156,922'],
 ['D', '700,500 740,430 790,440'], ['D', '510,610 520,575 560,565 575,600 545,615 540,590'], ['D', '505,620 530,640 580,635']
];
const brown = [
 ['A', '85,430 100,430 112,446'], ['A', '470,250 483,290 480,304'], ['A', '1037,35 1025,90 1030,130 1050,150 1045,190'], ['A', '1030,130 1050,155 1060,130 1080,140'], ['A', '985,290 970,325 1040,365 1080,385 1090,405 1115,400 1125,490 1200,492'],
 ['B', '620,362 680,345 700,375 710,460 735,475 770,460'], ['B', '825,365 820,410 805,450'], ['B', '375,650 372,710 405,740 415,765 395,795'], ['B', '375,650 395,655'], ['B', '310,490 390,490'], ['B', '425,370 425,440'], ['B', '1040,265 1010,285 960,335 900,350'], ['B', '1070,318 1090,280 1120,275'], ['B', '990,350 1000,325 1070,318 1130,330 1160,325'], ['B', '1020,380 1070,360 1145,358 1180,365 1190,400'], ['B', '1020,400 1080,420 1140,438'], ['B', '870,500 900,488 930,540 970,595 960,650 930,668 870,650 800,620'], ['B', '970,600 1040,570 1040,540 1000,510'], ['B', '1040,570 1110,590 1180,600'], ['B', '1040,570 1070,640 1080,700 1115,750'], ['B', '1150,430 1125,500 1105,560'], ['B', '960,655 990,700 1040,770 1065,803'], ['B', '815,660 870,670 910,720 1000,760 1040,775'], ['B', '820,733 880,738 960,790 940,812 860,830 820,820'], ['B', '820,870 870,895 930,885 965,920 940,970 900,985'], ['B', '985,810 990,870 955,930'], ['B', '985,860 1010,842 1025,870 1030,920'], ['B', '920,990 1000,930 1090,925'], ['B', '1060,803 1045,860 1040,925'], ['B', '460,845 480,870 560,880 575,920 640,985 690,995 760,965 820,945 860,980 880,1050'], ['B', '690,815 730,825 725,805'], ['B', '768,778 800,785 830,770'], ['B', '970,1080 960,1030 930,1000'], ['B', '1030,1085 1090,1040 1100,990'], ['B', '1030,1088 1130,1105 1160,1120 1110,1140 1070,1160 970,1140'], ['B', '800,1040 820,1090 855,1120 855,1190'], ['B', '480,1000 530,1055 600,1090 650,1120 640,1180 680,1240 720,1280'], ['B', '440,1040 490,1080 520,1160 490,1200 515,1285'], ['B', '570,1110 640,1105 720,1120'],
 ['B', '180,985 230,1000 285,965'], ['B', '405,1180 400,1285'],
 ['C', '375,240 410,265 405,230 455,240 490,205 498,260 480,320 455,335 410,290'], ['C', '295,305 320,285 370,300 440,385 480,415 535,400 580,420'], ['C', '450,335 460,375 535,375'], ['C', '595,205 580,300 585,370 575,430 580,500 660,560'], ['C', '230,545 300,480 350,490 430,440 480,460 485,510'], ['C', '230,555 320,515 365,540 480,480'], ['C', '215,570 250,590 350,600 365,540 370,650 390,705'], ['C', '180,612 225,640 250,680 245,740 275,715 305,685 350,685 360,710 400,712 420,790 490,870'], ['C', '480,690 500,760 575,850'], ['C', '465,645 480,690'], ['C', '230,750 225,860 270,910 340,930'], ['C', '245,770 310,860 370,900 380,955 440,930'], ['C', '420,795 380,870 375,920'], ['C', '335,800 340,870'], ['C', '130,915 190,915 270,935'], ['C', '890,350 905,440 920,480 905,590'], ['C', '980,380 1000,470 980,570 1000,600'], ['C', '670,570 740,545 780,565 800,600 845,640 840,720 770,740 720,690'], ['C', '905,600 950,600 985,600 1000,650 1040,655 1105,655 1130,710'], ['C', '850,640 910,630 940,600 990,670 960,710 955,790'], ['C', '1040,660 1000,730 970,800'], ['C', '650,840 660,860 740,850 830,880'], ['C', '740,850 710,900 715,960'], ['C', '860,820 950,775'], ['C', '770,740 800,830 830,880'], ['C', '970,805 1050,795'], ['C', '1110,460 1130,530 1190,560 1230,600'], ['C', '1210,500 1240,480 1280,520 1320,530 1380,580 1440,620'], ['C', '1325,535 1310,610 1335,680 1440,640'], ['C', '1335,680 1290,750 1280,830'], ['C', '1190,765 1270,785 1285,855 1200,845 1190,900 1170,960 1080,970'], ['C', '1190,765 1215,790 1215,845'], ['C', '1285,860 1370,910 1400,945 1450,940'], ['C', '1270,870 1270,940 1240,980'], ['C', '1370,910 1370,990 1300,995 1290,1050'], ['C', '1400,945 1400,1000 1380,1080 1330,1080'], ['C', '1450,945 1430,1010 1485,1055'], ['C', '1400,885 1400,940'], ['C', '975,1060 965,1150 965,1190 905,1190'], ['C', '990,1060 1030,1110 1040,1170'], ['C', '870,1080 900,1020 940,1000'], ['C', '745,960 750,1050 730,1100 640,1145'], ['C', '1050,360 1080,420 1180,445 1240,370 1170,325 1105,325'], ['C', '1250,200 1260,240 1290,270 1300,355'], ['C', '300,935 310,980 350,960 390,955'],
 ['D', '245,250 245,160 300,155 325,190 305,225 245,245'], ['D', '305,225 325,270 375,275 430,355'], ['D', '160,325 250,310 290,280 350,275 375,215'], ['D', '275,310 360,345'], ['D', '330,275 360,320 360,370'], ['D', '490,320 490,370 540,430 550,470 600,475 615,440 590,380 560,350 495,355'], ['D', '465,380 500,370 525,400 545,430 510,420 475,410 465,380'], ['D', '435,475 480,470 545,460'], ['D', '645,415 700,405 745,405 780,370 790,290 830,270'], ['D', '940,0 935,90 930,180 915,260 885,290 885,330 905,380 895,430 935,460 920,520 925,580 970,640 1005,690 1005,730'], ['D', '890,30 890,95 950,90 985,65'], ['D', '955,95 960,130 1060,135 1115,130'], ['D', '925,585 870,620 800,640 740,640 690,640 640,665 575,630'], ['D', '570,690 590,660 640,655'], ['D', '740,205 780,180 890,180 920,235'], ['D', '750,215 780,260 830,270 870,310 870,400'], ['D', '640,120 700,110 735,150 715,210 660,165 640,120'], ['D', '590,260 620,320 625,385'], ['D', '505,700 515,770'], ['D', '120,760 120,870'], ['D', '85,808 140,803 205,817 245,770'], ['D', '170,720 155,745 150,800'], ['D', '265,625 320,665 360,660'], ['D', '1300,395 1302,520'], ['D', '1060,490 1075,440'], ['D', '115,640 170,630 185,650'], ['D', '930,180 975,240']
];
// Terrain clusters: sheet, centre, radii, line count, prevailing angle, spread
const clusters = [
 ['A',430,220,38,45,14,90,1.5],['A',430,340,90,55,28,30,2],['A',420,400,80,60,26,0,3],['A',340,500,75,60,34,50,2],['A',210,480,90,70,20,10,3],['A',120,470,35,100,14,90,2],['A',220,570,70,35,16,40,2],['A',510,370,15,100,12,90,2],['A',430,550,60,30,6,0,1],
 ['A',995,110,22,45,14,75,1],['A',1010,190,35,50,14,60,3],
 ['B',230,330,55,40,14,30,2],['B',370,340,85,45,35,30,1.5],['B',350,410,80,60,40,60,2.5],['B',215,440,60,50,20,40,2],['B',280,500,70,60,34,20,3],['B',300,590,60,60,44,60,3],['B',420,550,100,60,44,10,2],['B',490,340,45,45,14,80,3],['B',570,350,45,40,14,90,1],['B',480,470,60,50,14,40,3],['B',540,600,75,45,26,20,2.5],['B',250,700,40,80,24,90,2],['B',160,740,50,10,12,0,1],['B',420,690,25,60,12,80,1],['B',530,690,70,40,12,-20,2],['B',605,590,22,90,14,90,3],['B',215,760,25,25,12,30,3],
 ['B',870,370,30,50,24,70,2],['B',960,400,90,60,26,20,1],['B',820,480,50,50,20,110,1],['B',740,490,40,35,10,140,2],['B',830,580,60,40,18,30,2],['B',780,680,60,60,34,40,2],['B',730,620,35,60,12,120,2],['B',1140,555,40,25,10,150,2],['B',845,870,20,70,12,60,1],['B',650,900,30,70,12,100,1],['B',740,920,20,80,8,100,1],
 ['B',190,930,70,60,44,100,3],['B',380,900,80,50,44,20,2],['B',250,1010,110,40,34,-20,1],['B',430,950,100,60,46,20,2],['B',600,1020,130,40,34,20,.7],['B',390,1030,60,40,28,30,2],['B',300,1090,60,60,14,90,3],['B',180,1130,40,110,28,90,2],['B',460,1110,60,60,20,50,1.5],['B',550,1150,30,110,18,70,.6],['B',640,1210,70,60,16,40,1],['B',730,1220,60,60,16,20,2],['B',780,1100,60,60,16,40,2],['B',870,1040,40,80,18,80,1],['B',930,1150,50,90,30,90,1],['B',930,1010,30,40,12,60,3],['B',100,1130,30,60,14,90,3],['B',220,1180,60,90,34,90,2],['B',670,1130,50,30,10,30,1],
 ['C',540,300,20,90,10,90,1],['C',500,390,50,25,12,0,1],['C',635,440,60,70,60,20,3],['C',670,340,25,110,26,90,1],['C',760,280,60,80,26,90,3],['C',760,390,60,80,26,90,2],['C',540,540,50,50,20,80,2],['C',660,500,60,40,24,20,2],['C',790,460,50,60,16,130,2],['C',860,550,45,55,24,90,2],['C',945,470,22,110,16,90,1],['C',1030,480,30,50,10,90,3],['C',590,640,70,90,36,70,1.5],['C',730,610,50,60,34,20,3],['C',640,720,60,80,34,70,1.5],['C',570,780,50,80,16,90,2],['C',610,890,45,90,34,90,1.5],['C',780,740,40,60,26,80,2],['C',900,730,50,50,24,100,2],['C',1050,580,60,60,20,20,3],['C',1150,610,70,40,16,20,2],['C',1170,700,50,60,22,80,2],['C',1090,720,50,30,10,10,2],['C',1180,370,60,60,20,30,1],['C',1290,440,60,50,20,20,2],['C',1250,540,40,80,12,70,3],['C',1350,340,30,70,14,100,1],
 ['C',960,860,160,60,85,-10,1.2],['C',1140,860,70,80,50,80,1.5],['C',960,930,120,50,50,20,2],['C',860,1000,60,50,30,-10,2],['C',1120,1000,80,110,75,70,1.2],['C',1220,1000,50,100,34,90,2],['C',680,980,50,110,34,100,1.5],['C',540,900,50,60,20,20,2],['C',760,860,40,60,20,90,2],['C',680,1080,60,70,34,0,2.5],['C',830,1110,80,60,60,100,2.5],['C',920,1120,60,60,28,130,2],['C',1100,1120,120,60,80,30,2],['C',1260,1110,90,80,75,55,1.2],['C',1400,1120,90,80,110,30,3],['C',1380,1010,60,40,14,80,2],['C',130,850,70,60,28,60,3],['C',150,925,60,30,22,0,3],['C',245,990,50,50,28,60,3],['C',430,960,60,50,28,60,3],['C',480,1000,40,60,14,70,2],['C',190,1040,10,50,6,90,2],['C',590,1010,25,50,10,90,3],['C',1140,50,30,60,8,80,2],['C',410,140,50,14,8,0,2],
 ['D',620,160,80,60,34,40,3],['D',500,180,60,30,12,0,2],['D',400,190,50,30,14,60,3],['D',720,170,40,60,26,80,3],['D',820,150,40,70,16,90,1],['D',450,260,60,50,34,20,2.5],['D',560,250,50,60,28,50,2],['D',650,60,70,60,34,40,3],['D',790,60,80,50,34,60,3],['D',690,260,40,60,20,90,2],['D',740,340,50,60,34,70,3],['D',820,300,40,90,24,80,2],['D',860,410,40,40,14,60,2],['D',1030,220,50,60,34,50,3],['D',1110,270,110,50,70,20,3],['D',1190,200,50,80,40,80,3],['D',1180,70,70,50,34,40,3],['D',1230,340,90,40,50,10,3],['D',1100,370,60,50,30,50,3],['D',1200,440,70,60,50,70,2.5],['D',1270,430,35,70,24,90,2],['D',1150,510,80,50,34,50,3],['D',1080,590,40,50,20,60,3],['D',1140,660,60,50,16,60,3],
 ['D',180,400,60,60,34,40,1.2],['D',300,370,120,40,40,15,1],['D',180,470,70,50,40,60,3],['D',280,480,80,60,44,80,1.5],['D',350,420,90,40,34,15,1],['D',400,530,60,60,28,60,2],['D',170,560,60,50,16,0,1.5],['D',300,590,60,50,14,20,3],['D',190,650,90,50,44,40,2],['D',450,600,60,50,28,-20,1.5],['D',550,600,45,50,14,60,3],['D',540,520,60,40,14,20,2],['D',680,500,90,70,80,60,3],['D',790,480,90,60,60,50,3],['D',760,560,80,50,44,60,3],['D',880,480,50,60,24,20,2],['D',850,550,60,40,18,-20,2],['D',690,670,70,50,34,60,3],['D',620,620,40,60,16,60,1],['D',870,640,60,30,12,0,3],['D',950,660,40,40,10,60,3],['D',1000,640,40,60,12,50,2],['D',1110,730,80,14,14,0,1],['D',900,770,40,25,14,0,3],['D',180,720,70,35,14,40,3],['D',590,350,30,60,12,60,1],['D',640,710,50,30,12,30,3],['D',115,720,10,40,8,90,2],['D',310,710,60,20,6,30,3]
];
// Contour strokes keep clear of one another: each claims the cells it passes through.
const cell = 2.6, taken = new Map();
const key = (x, y) => Math.round(x / cell) * 4096 + Math.round(y / cell);
const roads = black.map(([k, s]) => rough(pts(k, s), .2));
roads.forEach(a => a.forEach(p => taken.set(key(p[0], p[1]), -1)));
let hair = '', id = 0;
const walk = (x, y, base, steps, drift) => {
  const me = ++id, line = [[x, y]]; let h = base, curl = (rnd() - .5) * .3;
  if (taken.has(key(x, y))) return null;
  taken.set(key(x, y), me);
  for (let s = 0; s < steps; s++) {
    h += curl + (rnd() - .5) * 1.900 + (base - h) * drift;
    const nx = x + Math.cos(h) * 2.2, ny = y + Math.sin(h) * 2.2, o = taken.get(key(nx, ny));
    if (o !== undefined && o !== me) { if (line.length < 3) return null; break; }
    x = nx; y = ny; taken.set(key(x, y), me); line.push([x, y]);
  }
  return line.length > 3 ? line : null;
};
for (const [k, cx, cy, rx, ry, n, ang, spread] of clusters) {
  const [ox, oy, sx, sy] = sheets[k];
  for (let i = 0; i < n * 1.25; i++) {
    const r = Math.pow(rnd(), .45) * 1.1, t = rnd() * 6.283;
    const x = ox + (cx + rx * r * Math.cos(t)) / sx, y = oy + (cy + ry * r * Math.sin(t)) / sy;
    const base = (ang + (rnd() < .5 ? 180 : 0)) * Math.PI / 180 + (rnd() - .5) * spread * .8;
    const line = walk(x, y, base, 8 + rnd() * 18 | 0, .12);
    if (!line) continue;
    hair += d(line);
    if (rnd() < .5) { const p = line[line.length >> 1], b = base + (rnd() < .5 ? 1.3 : -1.3), q = 2 + rnd() * 3; hair += d([p, [p[0] + Math.cos(b) * q, p[1] + Math.sin(b) * q], [p[0] + Math.cos(b + .5) * q * 1.8, p[1] + Math.sin(b + .5) * q * 1.8]]); }
  }
}
map.innerHTML = `<clipPath id="land"><path d="${outline}"/></clipPath><path d="${outline}" fill="#69a058"/>
<g clip-path="url(#land)" fill="none" stroke-linejoin="round"><path d="${hair}" stroke="#10200c" stroke-width=".95"/><path d="${roads.map(d).join('')}" stroke="#10200c" stroke-width="1.050"/>
<path d="${brown.map(([k, s]) => d(rough(pts(k, s), .17))).join('')}" stroke="#85542f" stroke-width=".95"/></g>
<path d="${outline}" fill="none" stroke="#0d150b" stroke-width="1.100"/>`;
</script>
</body>
</html>
